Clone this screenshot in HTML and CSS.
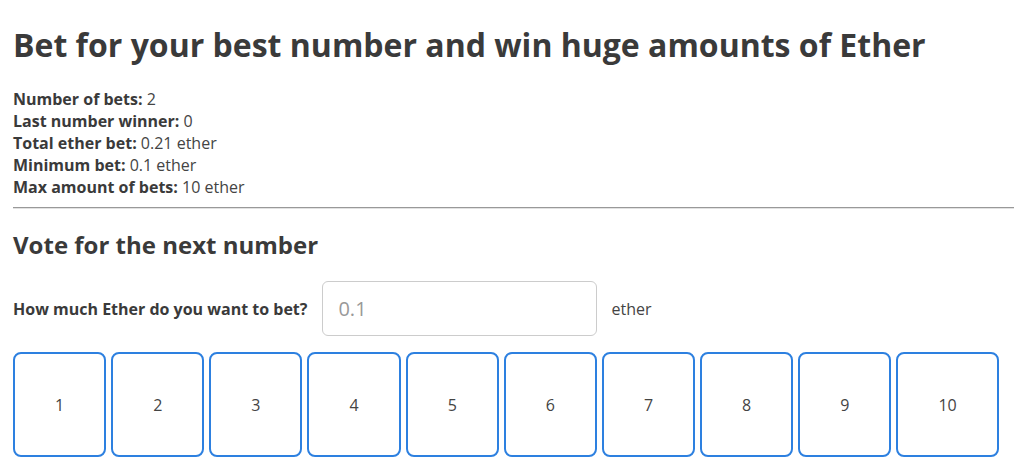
FILE: index.html
```html
<!DOCTYPE html>
<html>
<head>
<meta charset="utf-8">
<link rel="stylesheet" href="styles.css">
</head>
<body>
<div class="page">
  <h1 class="title">Bet for your best number and win huge amounts of Ether</h1>
  <div class="stats">
    <div><b>Number of bets:</b> <span>2</span></div>
    <div><b>Last number winner:</b> <span>0</span></div>
    <div><b>Total ether bet:</b> <span>0.21</span> ether</div>
    <div><b>Minimum bet:</b> <span>0.1</span> ether</div>
    <div><b>Max amount of bets:</b> <span>10</span> ether</div>
  </div>
  <hr class="rule">
  <h2 class="subtitle">Vote for the next number</h2>
  <div class="bet-row">
    <label class="bet-label">How much Ether do you want to bet?</label>
    <input class="bet-input" type="number" placeholder="0.1">
    <span class="unit">ether</span>
  </div>
  <ul class="numbers">
    <li class="num">1</li>
    <li class="num">2</li>
    <li class="num">3</li>
    <li class="num">4</li>
    <li class="num">5</li>
    <li class="num">6</li>
    <li class="num">7</li>
    <li class="num">8</li>
    <li class="num">9</li>
    <li class="num">10</li>
  </ul>
</div>
</body>
</html>
```
FILE: styles.css
```css
html, body {
  margin: 0;
  padding: 0;
  background: #fff;
}
body {
  font-family: "Open Sans", sans-serif;
  color: #444;
}
.page {
  padding: 0 0 0 13px;
}
.title {
  margin: 0;
  padding-top: 23px;
  font-size: 32px;
  font-weight: 700;
  line-height: 44px;
  color: #3a3a3a;
}
.stats {
  margin-top: 21px;
  font-size: 16px;
  line-height: 22px;
  color: #444;
}
.stats b {
  font-weight: 700;
  color: #3a3a3a;
}
.rule {
  margin: 9px 0 0 0;
  border: 0;
  border-top: 1px solid #999;
  border-bottom: 1px solid #e2e2e2;
  height: 0;
}
.subtitle {
  margin: 20px 0 0 0;
  font-size: 24px;
  line-height: 32px;
  font-weight: 700;
  color: #3a3a3a;
}
.bet-row {
  display: flex;
  align-items: center;
  margin-top: 20px;
}
.bet-label {
  font-size: 16px;
  font-weight: 700;
  color: #3a3a3a;
}
.bet-input {
  box-sizing: border-box;
  width: 275px;
  height: 55px;
  margin-left: 15px;
  padding: 0 15px;
  border: 1px solid #ccc;
  border-radius: 6px;
  font-family: "Open Sans", sans-serif;
  font-size: 20px;
  color: #444;
  outline: none;
}
.bet-input::placeholder {
  color: #999;
}
.unit {
  margin-left: 14px;
  font-size: 16px;
  color: #444;
}
.numbers {
  display: flex;
  gap: 5px;
  list-style: none;
  margin: 16px 0 0 0;
  padding: 0;
}
.num {
  box-sizing: border-box;
  height: 105px;
  padding: 0 40px;
  min-width: 93px;
  display: flex;
  align-items: center;
  justify-content: center;
  border: 2px solid #2d80e0;
  border-radius: 8px;
  font-size: 16px;
  color: #444;
}
```
